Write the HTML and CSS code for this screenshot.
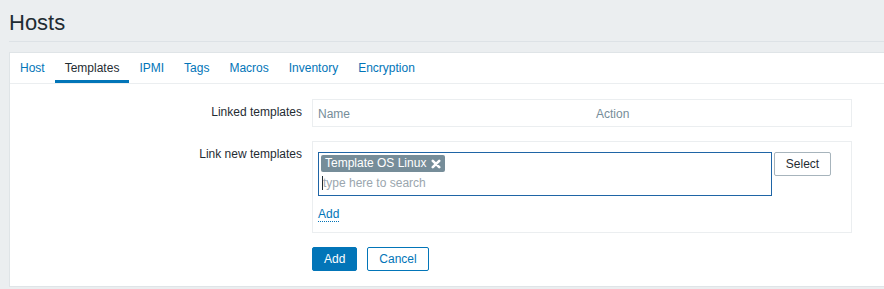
FILE: index.html
```html
<!DOCTYPE html>
<html lang="en">
<head>
    <meta charset="UTF-8">
    <meta name="viewport" content="width=device-width, initial-scale=1.0">
    <title>Hosts</title>
    <link rel="stylesheet" href="styles.css">
</head>
<body>
    <div class="header">
        <h1>Hosts</h1>
    </div>
    <div class="panel">
        <ul class="tabs">
            <li><a href="#">Host</a></li>
            <li class="active"><a href="#">Templates</a></li>
            <li><a href="#">IPMI</a></li>
            <li><a href="#">Tags</a></li>
            <li><a href="#">Macros</a></li>
            <li><a href="#">Inventory</a></li>
            <li><a href="#">Encryption</a></li>
        </ul>
        <div class="form">
            <label class="form-label">Linked templates</label>
            <div class="linked-table">
                <div class="col-name">Name</div>
                <div class="col-action">Action</div>
            </div>

            <label class="form-label">Link new templates</label>
            <div class="link-box">
                <div class="ms-row">
                    <div class="multiselect">
                        <span class="ms-tag">Template OS Linux
                            <svg class="ms-remove" width="10" height="10" viewBox="0 0 10 10">
                                <path d="M1.8 1.8 L8.2 8.2 M8.2 1.8 L1.8 8.2" stroke="#fff" stroke-width="2.6" stroke-linecap="round"/>
                            </svg>
                        </span>
                        <div class="ms-search"><span class="caret"></span>type here to search</div>
                    </div>
                    <button class="btn-alt">Select</button>
                </div>
                <div class="add-row"><a href="#" class="link-dotted">Add</a></div>
            </div>

            <div class="form-actions">
                <button class="btn-primary">Add</button>
                <button class="btn-outline">Cancel</button>
            </div>
        </div>
    </div>
</body>
</html>
```

FILE: styles.css
```css
body {
    margin: 0;
    padding: 0 0 0 9px;
    font-family: "Liberation Sans", Arial, sans-serif;
    font-size: 12px;
    color: #1f2c33;
    background-color: #ebeef0;
}
.header {
    padding: 10px 0 5px 0;
    border-bottom: 1px solid #dde2e6;
}
.header h1 {
    margin: 0;
    font-size: 22px;
    line-height: 26px;
    font-weight: normal;
}
.panel {
    margin-top: 10px;
    background: white;
    border: 1px solid #dfe4e7;
    border-right: none;
}
.tabs {
    display: flex;
    list-style: none;
    margin: 0;
    padding: 0;
    border-bottom: 1px solid #ebeef0;
}
.tabs li a {
    display: block;
    height: 30px;
    line-height: 30px;
    padding: 0 10px;
    color: #0275b8;
    text-decoration: none;
}
.tabs li.active a {
    color: #1f2c33;
    box-shadow: inset 0 -3px 0 #0275b8;
}
.form {
    display: grid;
    grid-template-columns: 292px 540px;
    column-gap: 10px;
    row-gap: 14px;
    padding: 15px 0 15px 0;
}
.form-label {
    text-align: right;
    line-height: 14px;
    padding-top: 6px;
}
.linked-table {
    display: grid;
    grid-template-columns: 278px 1fr;
    border: 1px solid #ebeef0;
    color: #768d99;
}
.linked-table div {
    padding: 7px 5px 5px 5px;
    line-height: 14px;
}
.link-box {
    border: 1px solid #ebeef0;
    padding: 10px 5px 11px 5px;
}
.ms-row {
    display: flex;
    align-items: flex-start;
    gap: 2px;
}
.multiselect {
    box-sizing: border-box;
    width: 454px;
    height: 44px;
    border: 1px solid #1f65a6;
    padding: 0 2px;
}
.ms-tag {
    display: inline-flex;
    align-items: center;
    margin-top: 2px;
    height: 17px;
    padding: 0 4px;
    background: #768d99;
    color: white;
    border-radius: 2px;
    line-height: 17px;
}
.ms-remove {
    margin-left: 5px;
}
.ms-search {
    height: 22px;
    line-height: 22px;
    padding-left: 1px;
    color: #9aa6ae;
}
.caret {
    display: inline-block;
    width: 1px;
    height: 14px;
    background: #1f2c33;
    vertical-align: -3px;
}
.btn-alt {
    height: 24px;
    width: 57px;
    padding: 0;
    background: white;
    border: 1px solid #a7b4bc;
    border-radius: 2px;
    color: #1f2c33;
    font-family: inherit;
    font-size: 12px;
}
.add-row {
    margin-top: 11px;
    line-height: 14px;
}
.link-dotted {
    color: #0275b8;
    text-decoration: none;
    border-bottom: 1px dotted #0275b8;
}
.form-actions {
    grid-column: 2;
    display: flex;
    gap: 10px;
}
.btn-primary, .btn-outline {
    height: 24px;
    padding: 0 11px;
    border-radius: 2px;
    font-family: inherit;
    font-size: 12px;
    border: 1px solid #0275b8;
}
.btn-primary {
    background: #0275b8;
    color: white;
}
.btn-outline {
    background: white;
    color: #0275b8;
}
```
